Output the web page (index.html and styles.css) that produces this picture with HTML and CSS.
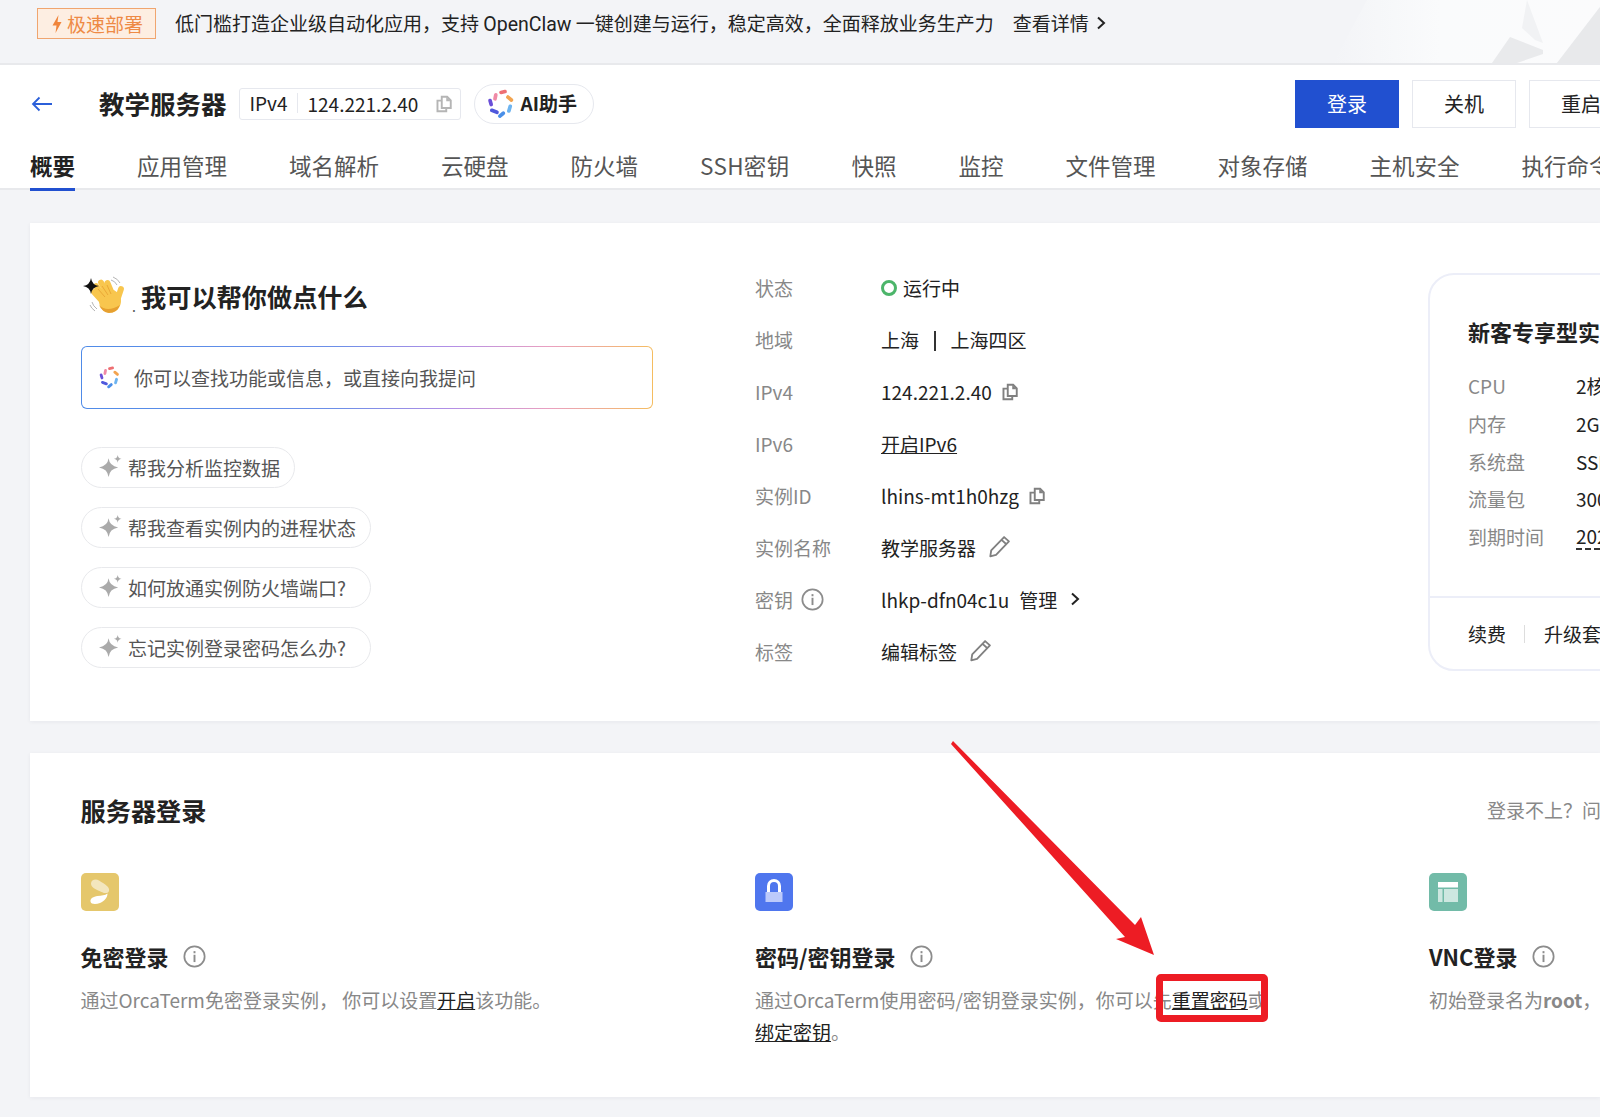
FILE: index.html
```html
<!DOCTYPE html>
<html lang="zh-CN">
<head>
<meta charset="utf-8">
<title>教学服务器</title>
<link rel="stylesheet" href="styles.css">
</head>
<body>
<svg class="defs" width="0" height="0" aria-hidden="true">
  <defs>
    <symbol id="logo" viewBox="0 0 26 26">
      <g fill="none" stroke-width="3.200" stroke-linecap="round">
        <path d="M8.500 5 7.800 8.500" stroke="#f08aa6"/>
        <path d="M13 3 16.500 2.200" stroke="#ee6f72"/>
        <path d="M19 7 22 9.500" stroke="#f2a450"/>
        <path d="M21 15 19.800 19" stroke="#6db4f0"/>
        <path d="M15 21 12 23.500" stroke="#4a8fe8"/>
        <path d="M9.500 20.200 5 18.500" stroke="#4f58dc"/>
        <path d="M3.500 10 4.500 13.500" stroke="#6a4fd8"/>
      </g>
    </symbol>
    <symbol id="copy" viewBox="0 0 16 16">
      <g fill="none" stroke="currentColor" stroke-width="1.700">
        <path d="M6 1.500h4.800L14 4.700V11.500H6z"/>
        <path d="M6 5H2.200v9.500H10v-3"/>
      </g>
      <path d="M10 1.500v4h4z" fill="currentColor"/>
    </symbol>
    <symbol id="pencil" viewBox="0 0 20 20">
      <path d="M14 1.800 18.200 5.600 7 17.200 2 18.500 2.800 13.400z M11.800 4.200 16 8" fill="none" stroke="#808080" stroke-width="1.600" stroke-linejoin="round"/>
    </symbol>
    <symbol id="info" viewBox="0 0 24 24">
      <circle cx="12" cy="12" r="10.600" fill="none" stroke="#8c8c8c" stroke-width="1.800"/>
      <rect x="11" y="10.200" width="2" height="7.600" fill="#8c8c8c"/>
      <rect x="11" y="6.400" width="2" height="2.200" fill="#8c8c8c"/>
    </symbol>
    <symbol id="chev" viewBox="0 0 12 16">
      <path d="M3 2.500 9 8 3 13.500" fill="none" stroke="#222" stroke-width="2"/>
    </symbol>
    <symbol id="spark" viewBox="0 0 24 24">
      <path d="M10 3.500Q11 11.500 20 13Q11 14.500 10 23Q9 14.500 0 13Q9 11.500 10 3.500Z" fill="#aaa"/>
      <path d="M19.500 0Q20 3.500 23.500 4Q20 4.500 19.500 8Q19 4.500 15.500 4Q19 3.500 19.500 0Z" fill="#aaa"/>
    </symbol>
    <linearGradient id="fade" x1="0" y1="0" x2="1" y2="0">
      <stop offset="0" stop-color="#f3f4f7"/>
      <stop offset=".4" stop-color="#fafbfc"/>
      <stop offset="1" stop-color="#fbfbfc"/>
    </linearGradient>
  </defs>
</svg>
<div class="page">
  <div class="banner">
    <svg class="banner-art" viewBox="0 0 300 63" aria-hidden="true">
      <polygon points="33,63 67,0 300,0 300,7 257,63" fill="url(#fade)"/>
      <polygon points="227,0 243,43 235,40 222,28" fill="#f1f2f4"/>
      <polygon points="192,63 210,37 243,50 243,54 217,63" fill="#e9eaec"/>
      <polygon points="257,63 300,7 300,63" fill="#e8e9eb"/>
    </svg>
    <span class="badge"><svg class="bolt" viewBox="0 0 10 18" aria-hidden="true"><path d="M6.500 0 0.500 10.500H4.500L3.500 18 9.500 7H5.500Z" fill="#f0853c"/></svg>极速部署</span>
    <span class="banner-text">低门槛打造企业级自动化应用，支持 <span class="latin">OpenClaw</span> 一键创建与运行，稳定高效，全面释放业务生产力</span>
    <span class="banner-link">查看详情<svg class="chev" aria-hidden="true"><use href="#chev"/></svg></span>
  </div>

  <header class="head">
    <div class="head-row">
      <svg class="back" viewBox="0 0 22 16" aria-hidden="true"><path d="M21 8H2M8.500 1.500 2 8l6.500 6.500" fill="none" stroke="#2b5fd9" stroke-width="1.800"/></svg>
      <h1 class="title">教学服务器</h1>
      <div class="ipbox">
        <span class="ipbox-kind">IPv4</span>
        <span class="ipbox-addr">124.221.2.40</span>
        <svg class="copy copy-head" aria-hidden="true"><use href="#copy"/></svg>
      </div>
      <div class="aibtn"><svg class="ailogo" aria-hidden="true"><use href="#logo"/></svg>AI助手</div>
      <div class="actions">
        <span class="btn btn-primary">登录</span>
        <span class="btn">关机</span>
        <span class="btn">重启</span>
      </div>
    </div>
    <nav class="tabs">
      <span class="tab tab-active">概要</span>
      <span class="tab">应用管理</span>
      <span class="tab">域名解析</span>
      <span class="tab">云硬盘</span>
      <span class="tab">防火墙</span>
      <span class="tab tab-ssh">SSH密钥</span>
      <span class="tab">快照</span>
      <span class="tab">监控</span>
      <span class="tab">文件管理</span>
      <span class="tab">对象存储</span>
      <span class="tab">主机安全</span>
      <span class="tab">执行命令</span>
    </nav>
  </header>

  <main class="main">
    <section class="card card-top">
      <div class="assist">
        <div class="assist-head">
          <svg class="wave" viewBox="0 0 44 40" aria-hidden="true">
            <g fill="none" stroke="#b5b5b5" stroke-width="1">
              <path d="M30 4Q34 5 36 9M32 1Q37 3 39 7"/>
              <path d="M11 26Q12 30 16 33M9 29Q10 32 14 35"/>
            </g>
            <g fill="none" stroke="#f8c64e" stroke-linecap="round" stroke-width="5.800">
              <path d="M22 26 13 16"/>
              <path d="M24 22 15 10"/>
              <path d="M28 20 20 6.500"/>
              <path d="M32 20 26.500 7"/>
              <path d="M36 25 40 13"/>
            </g>
            <ellipse cx="29" cy="25" rx="11" ry="11.500" fill="#f8c64e"/>
            <path d="M18 29Q26 37 39 29Q36 37 28 37Q21 36 18 29Z" fill="#e6a030"/>
            <g fill="none" stroke="#e6a030" stroke-width=".8">
              <path d="M17 13 24 21M21 10 27 19M26 9 30 18"/>
            </g>
            <path d="M10 2Q11 9 18 10Q11 11 10 18Q9 11 2 10Q9 9 10 2Z" fill="#111"/>
          </svg>
          <span class="dot-mark">.</span>
          <h2 class="assist-title">我可以帮你做点什么</h2>
        </div>
        <div class="ask">
          <svg class="asklogo" aria-hidden="true"><use href="#logo"/></svg>
          <span>你可以查找功能或信息，或直接向我提问</span>
        </div>
        <div class="chips">
          <div class="chip"><svg class="spark" aria-hidden="true"><use href="#spark"/></svg>帮我分析监控数据</div>
          <div class="chip chip-wide"><svg class="spark" aria-hidden="true"><use href="#spark"/></svg>帮我查看实例内的进程状态</div>
          <div class="chip chip-wide"><svg class="spark" aria-hidden="true"><use href="#spark"/></svg>如何放通实例防火墙端口?</div>
          <div class="chip chip-wide"><svg class="spark" aria-hidden="true"><use href="#spark"/></svg>忘记实例登录密码怎么办?</div>
        </div>
      </div>

      <dl class="info">
        <div class="info-row"><dt>状态</dt><dd><i class="ring"></i>运行中</dd></div>
        <div class="info-row"><dt>地域</dt><dd>上海<i class="vsep"></i>上海四区</dd></div>
        <div class="info-row"><dt>IPv4</dt><dd>124.221.2.40<svg class="copy copy-sm" aria-hidden="true"><use href="#copy"/></svg></dd></div>
        <div class="info-row"><dt>IPv6</dt><dd><a class="link">开启IPv6</a></dd></div>
        <div class="info-row"><dt>实例ID</dt><dd>lhins-mt1h0hzg<svg class="copy copy-sm" aria-hidden="true"><use href="#copy"/></svg></dd></div>
        <div class="info-row"><dt>实例名称</dt><dd>教学服务器<svg class="pencil" aria-hidden="true"><use href="#pencil"/></svg></dd></div>
        <div class="info-row"><dt>密钥<svg class="info-i" aria-hidden="true"><use href="#info"/></svg></dt><dd>lhkp-dfn04c1u<span class="manage">管理</span><svg class="chev chev-far" aria-hidden="true"><use href="#chev"/></svg></dd></div>
        <div class="info-row"><dt>标签</dt><dd>编辑标签<svg class="pencil" aria-hidden="true"><use href="#pencil"/></svg></dd></div>
      </dl>

      <aside class="promo">
        <div class="promo-body">
          <h3 class="promo-title">新客专享型实</h3>
          <div class="promo-row"><span>CPU</span><b>2核</b></div>
          <div class="promo-row"><span>内存</span><b>2G</b></div>
          <div class="promo-row"><span>系统盘</span><b>SSD</b></div>
          <div class="promo-row"><span>流量包</span><b>300</b></div>
          <div class="promo-row"><span>到期时间</span><b class="dashed">2026</b></div>
        </div>
        <div class="promo-foot">
          <span>续费</span><i class="foot-sep"></i><span>升级套</span>
        </div>
      </aside>
    </section>

    <section class="card card-login">
      <div class="login-head">
        <h2 class="login-title">服务器登录</h2>
        <span class="login-help">登录不上？问</span>
      </div>
      <div class="login-grid">
        <div class="login-col">
          <svg class="mode-icon" viewBox="0 0 38 38" aria-hidden="true">
            <rect width="38" height="38" rx="5" fill="#e5c76c"/>
            <path d="M10 10.500c0-4 5-5 8-3 3 2 6 3.500 8.500 6 2.500 2.500 2 6-1 6.500-2.500.5-5-1-7-2-3.500-1.500-8.500-3.500-8.500-7.500z" fill="#f3e6bd"/>
            <path d="M9.500 28.500c-.5-3 3-5 7-5.500 4-.5 7.500-.5 10-2.500 0 4-3 7.500-7.500 9.500-4 1.500-9 1.500-9.500-1.500z" fill="#fff"/>
          </svg>
          <h3 class="mode-title">免密登录<svg class="info-i info-title" aria-hidden="true"><use href="#info"/></svg></h3>
          <p class="mode-desc">通过OrcaTerm免密登录实例， 你可以设置<a class="link">开启</a>该功能。</p>
        </div>
        <div class="login-col">
          <svg class="mode-icon" viewBox="0 0 38 38" aria-hidden="true">
            <rect width="38" height="38" rx="5" fill="#4f76ee"/>
            <path d="M13.500 19v-6a5.500 5.500 0 0 1 11 0v6" fill="none" stroke="#fff" stroke-width="3"/>
            <rect x="10.500" y="19" width="17" height="10" fill="#bccafb"/>
          </svg>
          <h3 class="mode-title">密码/密钥登录<svg class="info-i info-title" aria-hidden="true"><use href="#info"/></svg></h3>
          <p class="mode-desc">通过OrcaTerm使用密码/密钥登录实例，你可以先<a class="link">重置密码</a>或<a class="link">绑定密钥</a>。</p>
        </div>
        <div class="login-col">
          <svg class="mode-icon" viewBox="0 0 38 38" aria-hidden="true">
            <rect width="38" height="38" rx="5" fill="#72bba8"/>
            <rect x="9" y="9" width="20" height="5.500" fill="#fff"/>
            <rect x="9" y="16" width="4.500" height="13" fill="#cde7e0"/>
            <rect x="15" y="16" width="14" height="13" fill="#cde7e0"/>
          </svg>
          <h3 class="mode-title">VNC登录<svg class="info-i info-title" aria-hidden="true"><use href="#info"/></svg></h3>
          <p class="mode-desc mode-desc-nowrap">初始登录名为<b>root</b>，</p>
        </div>
      </div>
    </section>
  </main>

  <svg class="annot" viewBox="940 735 340 300" aria-hidden="true">
    <polygon points="953,741 1135,925 1141,917 1154,955 1116,939 1125,937 951,744" fill="#ed1c24"/>
    <rect x="1159.500" y="977.500" width="105" height="41" rx="1.500" fill="none" stroke="#ed1c24" stroke-width="7"/>
  </svg>
</div>
</body>
</html>
```

FILE: styles.css
```css
* { box-sizing: border-box; }
html, body { margin: 0; padding: 0; }
body {
  width: 1600px;
  height: 1117px;
  overflow: hidden;
  background: #f3f4f7;
  color: #222;
  font-family: "Noto Sans CJK SC", "Noto Sans", sans-serif;
  font-size: 19px;
}
h1, h2, h3, p, dl, dd { margin: 0; }
i { font-style: normal; }
.defs { position: absolute; }
.page { position: relative; width: 1600px; height: 1117px; overflow: hidden; }

/* banner */
.banner {
  position: relative;
  display: flex;
  align-items: flex-start;
  height: 65px;
  padding: 8px 0 0 37px;
  background: #f3f4f7;
  border-bottom: 2px solid #e8e9ec;
}
.banner-art { position: absolute; right: 0; top: 0; width: 300px; height: 63px; }
.badge {
  display: flex;
  align-items: center;
  width: 119px;
  height: 31px;
  padding-left: 13px;
  background: #fdeee2;
  border: 1px solid #f0a56f;
  color: #ee8a45;
  font-size: 19px;
  line-height: 29px;
}
.bolt { width: 12px; height: 18px; margin-right: 4px; flex: none; }
.banner-text { position: relative; margin-left: 19px; line-height: 29px; color: #222; }
.latin { font-family: Roboto, sans-serif; font-size: 19.500px; }
.banner-link { position: relative; display: flex; align-items: center; margin-left: 19px; line-height: 29px; color: #222; }
.chev { width: 12px; height: 16px; margin-left: 6px; }

/* header */
.head { background: #fff; }
.head-row {
  display: flex;
  align-items: center;
  height: 78px;
  padding-left: 31px;
  margin-right: -33px;
}
.back { width: 22px; height: 16px; flex: none; }
.title { margin-left: 46px; padding-bottom: 2px; font-size: 25.500px; font-weight: 700; line-height: 38px; color: #222; white-space: nowrap; }
.ipbox {
  display: flex;
  align-items: center;
  width: 222px;
  height: 32px;
  margin-left: 12px;
  padding: 0 0 2px 10px;
  border: 1px solid #e6e8ee;
  border-radius: 3px;
}
.ipbox-kind { width: 48px; line-height: 20px; border-right: 1px solid #e6e8ee; }
.ipbox-addr { margin-left: 10px; width: 128px; white-space: nowrap; }
.copy { width: 18px; height: 18px; flex: none; color: #808080; }
.copy-head { color: #b5b5b5; margin-left: -1px; margin-top: 2px; }
.copy-sm { margin-left: 9px; }
.aibtn {
  display: flex;
  align-items: center;
  height: 40px;
  width: 120px;
  margin-left: 13px;
  padding: 0 0 4px 11px;
  border: 1px solid #e6e8ee;
  border-radius: 20px;
  font-weight: 700;
  font-size: 19px;
  color: #222;
}
.ailogo { width: 30px; height: 30px; margin-right: 5px; margin-top: 4px; }
.actions { display: flex; gap: 13px; margin-left: auto; }
.btn {
  width: 104px;
  height: 48px;
  border: 1px solid #e6e8ee;
  background: #fff;
  text-align: center;
  line-height: 46px;
  font-size: 20px;
  color: #222;
}
.btn-primary { background: #2150d0; border-color: #2150d0; color: #fff; }

.tabs {
  display: flex;
  gap: 62px;
  height: 47px;
  padding-left: 30px;
  border-bottom: 2px solid #e8e9ec;
  white-space: nowrap;
}
.tab {
  height: 48px;
  border-bottom: 3px solid transparent;
  font-size: 22.500px;
  line-height: 44px;
  color: #555;
}
.tab-ssh { letter-spacing: .3px; }
.tab-active { font-weight: 700; color: #222; border-bottom-color: #2150d0; }

/* cards */
.main { padding: 33px 0 0 30px; }
.card { background: #fff; width: 1570px; box-shadow: 0 1px 4px rgba(30, 40, 70, .06); }
.card-top {
  display: grid;
  grid-template-columns: 674px 673px 400px;
  height: 498px;
  padding-left: 51px;
}

/* assistant */
.assist { padding-top: 53px; }
.assist-head { display: flex; align-items: center; height: 40px; }
.wave { width: 44px; height: 40px; flex: none; }
.dot-mark { width: 16px; align-self: flex-end; font-size: 14px; line-height: 20px; padding-left: 7px; color: #555; }
.assist-title { font-size: 25.200px; font-weight: 700; line-height: 40px; color: #222; white-space: nowrap; }
.ask {
  display: flex;
  align-items: center;
  width: 572px;
  height: 63px;
  margin-top: 30px;
  padding-left: 16px;
  border: 1.500px solid transparent;
  border-radius: 6px;
  background:
    linear-gradient(#fff, #fff) padding-box,
    linear-gradient(90deg, #4f8be8 0%, #6d8fe8 45%, #b48fe6 65%, #eaa0c0 82%, #f5bd60 100%) border-box;
  color: #555;
}
.asklogo { width: 23px; height: 23px; margin-right: 13px; flex: none; }
.chips { display: flex; flex-direction: column; align-items: flex-start; gap: 19px; margin-top: 38px; }
.chip {
  display: flex;
  align-items: center;
  width: 214px;
  height: 41px;
  padding-left: 17px;
  border: 1.500px solid #e8e9ec;
  border-radius: 21px;
  color: #555;
  white-space: nowrap;
}
.chip-wide { width: 290px; }
.spark { width: 23px; height: 23px; margin: -3px 6px 0 0; flex: none; }

/* instance info */
.info { padding-top: 39px; }
.info-row { display: flex; align-items: center; height: 51.900px; }
.info-row dt { display: flex; align-items: center; width: 126px; color: #888; }
.info-row dd { display: flex; align-items: center; color: #222; white-space: nowrap; }
.ring { width: 16px; height: 16px; margin-right: 6px; border: 3px solid #4cb56a; border-radius: 50%; }
.vsep { width: 1.500px; height: 20px; margin: 2px 15px 0; background: #333; }
.link { color: #222; text-decoration: underline; }
.pencil { width: 23px; height: 23px; margin-left: 12px; margin-top: -2px; flex: none; }
.info-i { width: 23px; height: 23px; margin-left: 8px; flex: none; }
.manage { margin-left: 10px; }
.chev-far { margin-left: 12px; }

/* promo */
.promo {
  display: flex;
  flex-direction: column;
  height: 398px;
  margin-top: 50px;
  border: 2px solid #eceef8;
  border-radius: 26px;
  background: #fff;
}
.promo-body { height: 323px; padding: 34px 0 0 38px; border-bottom: 2px solid #eceef8; }
.promo-title { font-size: 22px; font-weight: 700; line-height: 44px; margin-bottom: 14px; white-space: nowrap; color: #222; }
.promo-row { display: flex; height: 37.700px; align-items: center; white-space: nowrap; }
.promo-row span { width: 108px; color: #888; }
.promo-row b { font-weight: 400; color: #222; }
.dashed { border-bottom: 2px dashed #333; line-height: 24px; }
.promo-foot { display: flex; align-items: center; flex: 1; padding-left: 38px; white-space: nowrap; color: #222; }
.foot-sep { width: 1px; height: 18px; margin: 0 19px 0 18px; background: #ddd; }

/* login */
.card-login { height: 344px; margin-top: 32px; padding: 37px 0 0 50.500px; }
.login-head { display: grid; grid-template-columns: 1406.500px 1fr; align-items: center; height: 40px; }
.login-title { font-size: 25.200px; font-weight: 700; line-height: 40px; color: #222; }
.login-help { color: #888; white-space: nowrap; line-height: 40px; }
.login-grid { display: grid; grid-template-columns: 674.500px 674px 1fr; margin-top: 43px; }
.mode-icon { display: block; width: 38px; height: 38px; }
.mode-title { display: flex; align-items: center; height: 34px; margin-top: 28px; font-size: 22px; font-weight: 700; line-height: 34px; color: #222; white-space: nowrap; }
.info-title { margin-left: 14px; }
.mode-desc { width: 520px; margin-top: 11px; line-height: 32px; color: #888; }
.mode-desc-nowrap { white-space: nowrap; }

/* annotation over the page */
.annot { position: absolute; left: 940px; top: 735px; width: 340px; height: 300px; }
```
